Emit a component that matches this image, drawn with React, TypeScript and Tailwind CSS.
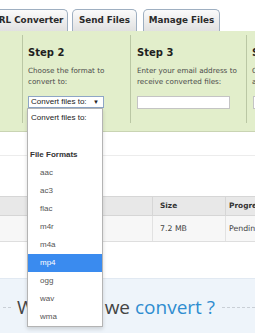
import React from 'react';

const Tab: React.FC<{ className?: string; children: React.ReactNode }> = ({ className = '', children }) => (
  <div
    className={`h-[22px] shrink-0 flex items-center justify-center rounded-t-[5px] border border-b-0 border-[#9eafc1] bg-linear-to-b from-[#fbfbfb] to-[#e1e1e1] text-[8.8px] font-bold text-[#2b2b2b] whitespace-nowrap ${className}`}
  >
    {children}
  </div>
);

export default function App() {
  const formats = ['aac', 'ac3', 'flac', 'm4r', 'm4a', 'mp4', 'ogg', 'wav', 'wma'];
  const selected = 'mp4';

  return (
    <div className="relative w-[255px] h-[333px] overflow-hidden bg-white font-['DejaVu_Sans',sans-serif]">
      {/* tabs */}
      <div className="flex items-end h-[31px]">
        <Tab className="ml-[-13px] w-[81px]">URL Converter</Tab>
        <Tab className="ml-[4px] w-[65px]">Send Files</Tab>
        <Tab className="ml-[6px] w-[77px]">Manage Files</Tab>
      </div>

      {/* steps */}
      <div className="flex h-[101px] bg-[#e2eecb] border-b border-[#c9d4b3] pt-[4px] pb-[8px]">
        <div className="w-[22px] shrink-0" />
        <div className="w-[108px] shrink-0 border-l border-[#bac7a4] pl-[5px] pt-[11px]">
          <h3 className="text-[10px] leading-[14px] font-bold text-[#1f1f1f]">Step 2</h3>
          <p className="mt-[6px] text-[7.2px] leading-[10.5px] text-[#4a4a4a]">
            Choose the format to<br />convert to:
          </p>
          <div className="mt-[9px] w-[76px] h-[12px] border border-[#8ea6c6] bg-white flex items-center justify-between pl-[2px] pr-[4px] font-['Liberation_Sans',sans-serif] text-[8px] text-[#222]">
            <span>Convert files to:</span>
            <span className="text-[6px]">▼</span>
          </div>
        </div>
        <div className="w-[116px] shrink-0 border-l border-[#bac7a4] pl-[6px] pt-[11px]">
          <h3 className="text-[10px] leading-[14px] font-bold text-[#1f1f1f]">Step 3</h3>
          <p className="mt-[6px] text-[7.2px] leading-[10.5px] text-[#4a4a4a] whitespace-nowrap">
            Enter your email address to<br />receive converted files:
          </p>
          <div className="mt-[9px] w-[93px] h-[13px] border border-[#c4c4c4] bg-white" />
        </div>
        <div className="w-[60px] shrink-0 border-l border-[#bac7a4] pl-[5px] pt-[11px]">
          <h3 className="text-[10px] leading-[14px] font-bold text-[#1f1f1f] whitespace-nowrap">Step 4</h3>
          <p className="mt-[6px] text-[7.2px] leading-[10.5px] text-[#4a4a4a] whitespace-nowrap">
            Convert<br />and
          </p>
          <div className="mt-[9px] ml-[1px] w-[50px] h-[13px] border border-[#c4c4c4] bg-white" />
        </div>
      </div>

      {/* spacer */}
      <div className="h-[24px] border-b border-[#ececec]" />
      <div className="h-[40px]" />

      {/* file table */}
      <div className="flex h-[20px] bg-[#e8e8e8] border-t border-b border-[#d6d6d6] text-[7.4px] font-bold text-[#333]">
        <div className="w-[152px] shrink-0" />
        <div className="w-[73px] shrink-0 border-l border-[#d6d6d6] pl-[7px] flex items-center">Size</div>
        <div className="flex-1 border-l border-[#d6d6d6] pl-[3px] flex items-center whitespace-nowrap">Progress</div>
      </div>
      <div className="flex h-[26px] bg-[#f7f7f7] border-b border-[#dedede] text-[7.8px] text-[#444]">
        <div className="w-[152px] shrink-0" />
        <div className="w-[73px] shrink-0 border-l border-[#e2e2e2] pl-[7px] flex items-center">7.2 MB</div>
        <div className="flex-1 border-l border-[#e2e2e2] pl-[3px] flex items-center whitespace-nowrap">Pending</div>
      </div>

      <div className="h-[36px]" />

      {/* what can we convert */}
      <div className="h-[60px] bg-[#eef4fa] border-t border-[#e1e9f2] pt-[15px]">
        <div className="flex items-center h-[26px] font-['Open_Sans',sans-serif]">
          <div className="ml-[3px] w-[8px] border-t border-dashed border-[#c9cfd6]" />
          <div className="flex-1 text-right whitespace-nowrap overflow-hidden text-[19px] text-[#444]">
            What can we <span className="text-[#2f8dd0]">convert ?</span>
          </div>
          <div className="ml-[7px] w-[33px] border-t border-dashed border-[#c9cfd6]" />
        </div>
      </div>

      {/* open format menu */}
      <div className="absolute left-[27px] top-[108px] w-[76px] h-[219px] bg-white border border-[#b4b4b4] shadow-[0_2px_4px_rgba(0,0,0,0.15)] font-['Liberation_Sans',sans-serif] text-[8px] text-[#333]">
        <div className="h-[18px] flex items-center pl-[3px] text-[#222]">Convert files to:</div>
        <div className="h-[19px]" />
        <div className="h-[18px] flex items-center pl-[2px] font-bold text-[#333]">File Formats</div>
        {formats.map((f) => (
          <div
            key={f}
            className={`h-[18px] flex items-center pl-[12px] ${f === selected ? 'bg-[#3a8bef] text-white' : 'text-[#555]'}`}
          >
            {f}
          </div>
        ))}
      </div>
    </div>
  );
}
